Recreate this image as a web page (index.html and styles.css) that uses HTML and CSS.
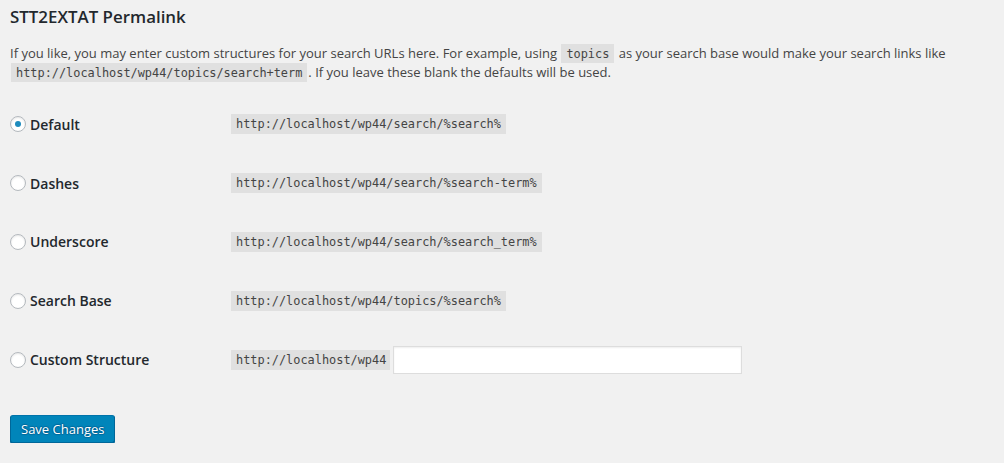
FILE: index.html
```html
<!DOCTYPE html>
<html>
<head>
<meta charset="utf-8">
<link rel="stylesheet" href="styles.css">
</head>
<body>
<div class="wrap">
  <h2 class="title">STT2EXTAT Permalink</h2>
  <p class="desc">If you like, you may enter custom structures for your search URLs here. For example, using <code>topics</code> as your search base would make your search links like <code>http://localhost/wp44/topics/search+term</code>. If you leave these blank the defaults will be used.</p>
  <div class="form-table">
    <div class="row">
      <label class="opt"><input type="radio" name="s" checked><span>Default</span></label>
      <div class="val"><code>http://localhost/wp44/search/%search%</code></div>
    </div>
    <div class="row">
      <label class="opt"><input type="radio" name="s"><span>Dashes</span></label>
      <div class="val"><code>http://localhost/wp44/search/%search-term%</code></div>
    </div>
    <div class="row">
      <label class="opt"><input type="radio" name="s"><span>Underscore</span></label>
      <div class="val"><code>http://localhost/wp44/search/%search_term%</code></div>
    </div>
    <div class="row">
      <label class="opt"><input type="radio" name="s"><span>Search Base</span></label>
      <div class="val"><code>http://localhost/wp44/topics/%search%</code></div>
    </div>
    <div class="row">
      <label class="opt"><input type="radio" name="s"><span>Custom Structure</span></label>
      <div class="val"><code class="pre">http://localhost/wp44</code><input type="text" class="text"></div>
    </div>
  </div>
  <div class="submit"><button class="button-primary">Save Changes</button></div>
</div>
</body>
</html>
```
FILE: styles.css
```css
html, body {
  margin: 0;
  padding: 0;
  background: #f1f1f1;
}
body {
  font-family: "Open Sans", "Noto Sans", sans-serif;
  font-size: 13px;
  color: #444;
}
.wrap {
  padding: 5px 10px 0 10px;
}
.title {
  margin: 0;
  font-size: 16.9px;
  line-height: 23px;
  font-weight: 600;
  color: #23282d;
}
.desc {
  margin: 16px 0 0 0;
  line-height: 19px;
  font-size: 13px;
  color: #444;
}
code {
  font-family: "DejaVu Sans Mono", "Liberation Mono", monospace;
  font-size: 11.9px;
  line-height: 15px;
  padding: 3px 5px 2px;
  margin: 0 1px;
  background: rgba(0, 0, 0, 0.07);
  color: #444;
}
.form-table {
  margin-top: 13px;
  display: flex;
  flex-direction: column;
}
.row {
  display: flex;
  align-items: center;
  height: 58.8px;
}
.opt {
  width: 210px;
  display: flex;
  align-items: center;
  gap: 4px;
  font-size: 14px;
  font-weight: 600;
  color: #23282d;
}
.opt input {
  -webkit-appearance: none;
  appearance: none;
  margin: 0;
  width: 16px;
  height: 16px;
  border: 1px solid #b4b9be;
  border-radius: 50%;
  background: #fff;
  box-shadow: inset 0 1px 2px rgba(0, 0, 0, 0.1);
  display: flex;
  align-items: center;
  justify-content: center;
  box-sizing: border-box;
}
.opt input:checked::before {
  content: "";
  width: 6px;
  height: 6px;
  border-radius: 50%;
  background: #1e8cbe;
}
.val {
  padding-left: 10px;
  display: flex;
  align-items: center;
}
.val code {
  display: inline-block;
}
.pre {
  padding-right: 4px;
}
.text {
  margin-left: 2px;
  width: 349px;
  height: 28px;
  box-sizing: border-box;
  border: 1px solid #ddd;
  background: #fff;
  box-shadow: inset 0 1px 2px rgba(0, 0, 0, 0.07);
  outline: none;
}
.submit {
  margin-top: 26.5px;
}
.button-primary {
  font-family: "Open Sans", "Noto Sans", sans-serif;
  font-size: 13px;
  height: 28px;
  line-height: 26px;
  padding: 0 10px 1px;
  border: 1px solid #0073aa;
  border-color: #0073aa #006799 #006799;
  border-radius: 3px;
  background: #0085ba;
  color: #fff;
  box-shadow: 0 1px 0 #006799;
  text-shadow: 0 -1px 1px #006799, 1px 0 1px #006799, 0 1px 1px #006799, -1px 0 1px #006799;
  cursor: pointer;
}
```
